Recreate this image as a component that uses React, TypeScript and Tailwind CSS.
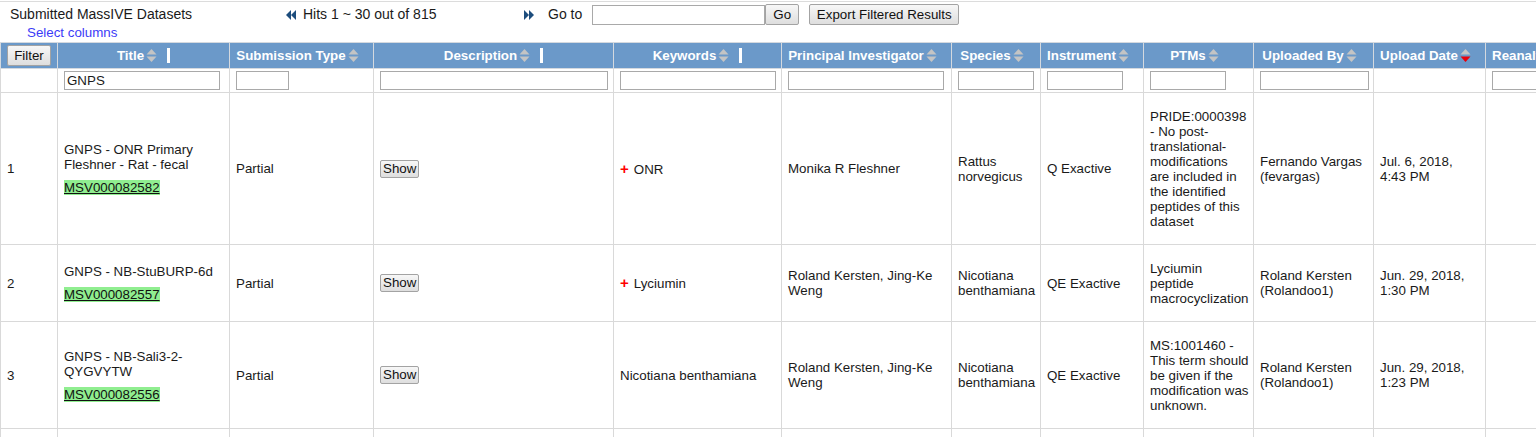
import React from 'react';

interface Column {
    label: string;
    width: string;
    input?: string;
    bar?: boolean;
    active?: boolean;
    left?: boolean;
}

const columns: Column[] = [
    { label: 'Title', width: 'w-[172px]', input: 'w-[156px]', bar: true },
    { label: 'Submission Type', width: 'w-[144px]', input: 'w-[53px]' },
    { label: 'Description', width: 'w-[240px]', input: 'w-[228px]', bar: true },
    { label: 'Keywords', width: 'w-[168px]', input: 'w-[156px]', bar: true },
    { label: 'Principal Investigator', width: 'w-[170px]', input: 'w-[156px]' },
    { label: 'Species', width: 'w-[89px]', input: 'w-[76px]' },
    { label: 'Instrument', width: 'w-[103px]', input: 'w-[76px]' },
    { label: 'PTMs', width: 'w-[110px]', input: 'w-[76px]' },
    { label: 'Uploaded By', width: 'w-[120px]', input: 'w-[109px]' },
    { label: 'Upload Date', width: 'w-[112px]', active: true },
    { label: 'Reanalysis', width: 'w-[130px]', input: 'w-[109px]', left: true },
];

const rows = [
    {
        title: 'GNPS - ONR Primary Fleshner - Rat - fecal',
        id: 'MSV000082582',
        type: 'Partial',
        keyword: 'ONR',
        plus: true,
        pi: 'Monika R Fleshner',
        species: 'Rattus norvegicus',
        instrument: 'Q Exactive',
        ptms: 'PRIDE:0000398 - No post-translational-modifications are included in the identified peptides of this dataset',
        uploader: 'Fernando Vargas (fevargas)',
        date: 'Jul. 6, 2018, 4:43 PM',
    },
    {
        title: 'GNPS - NB-StuBURP-6d',
        id: 'MSV000082557',
        type: 'Partial',
        keyword: 'Lyciumin',
        plus: true,
        pi: 'Roland Kersten, Jing-Ke Weng',
        species: 'Nicotiana benthamiana',
        instrument: 'QE Exactive',
        ptms: 'Lyciumin peptide macrocyclization',
        uploader: 'Roland Kersten (Rolandoo1)',
        date: 'Jun. 29, 2018, 1:30 PM',
    },
    {
        title: 'GNPS - NB-Sali3-2-QYGVYTW',
        id: 'MSV000082556',
        type: 'Partial',
        keyword: 'Nicotiana benthamiana',
        plus: false,
        pi: 'Roland Kersten, Jing-Ke Weng',
        species: 'Nicotiana benthamiana',
        instrument: 'QE Exactive',
        ptms: 'MS:1001460 - This term should be given if the modification was unknown.',
        uploader: 'Roland Kersten (Rolandoo1)',
        date: 'Jun. 29, 2018, 1:23 PM',
    },
];

const SortIcon = ({ active }: { active?: boolean }) => (
    <svg width="11" height="15" viewBox="0 0 11 15" className="shrink-0">
        <polygon points="0.5,6.5 5.5,1 10.5,6.5" fill="#c4c4c4" />
        <polygon points="0.5,8.5 10.5,8.5 5.5,14" fill={active ? '#e8000b' : '#c4c4c4'} />
    </svg>
);

const Arrows = ({ dir }: { dir: 'left' | 'right' }) => (
    <svg width="11" height="10" viewBox="0 0 11 10" className="shrink-0">
        {dir === 'left' ? (
            <>
                <polygon points="0,5 5,0 5,10" fill="#1d4d7d" />
                <polygon points="5,5 10,0 10,10" fill="#1d4d7d" />
            </>
        ) : (
            <>
                <polygon points="1,0 6,5 1,10" fill="#1d4d7d" />
                <polygon points="6,0 11,5 6,10" fill="#1d4d7d" />
            </>
        )}
    </svg>
);

const btn = 'border border-[#a3a3a3] rounded-[2px] bg-gradient-to-b from-[#f7f7f7] to-[#dedede] text-[#111] leading-none';

const td = 'border border-[#d9d9d9] pl-[6px] pr-[4px] py-[15.5px] align-middle';

export default function App() {
    return (
        <div className="h-[437px] w-[1536px] overflow-hidden bg-white font-['Liberation_Sans',Arial,sans-serif] text-[13.333px] leading-[15px] text-[#1a1a1a]">
            <div className="mt-px border-t border-[#dcdcdc]">
                <div className="mt-[2px] flex h-[21px] items-center">
                    <span className="w-[286px] pl-[10px] text-[14px]">Submitted MassIVE Datasets</span>
                    <div className="flex w-[237px] items-center">
                        <Arrows dir="left" />
                        <span className="ml-[6px] text-[14px]">Hits 1 ~ 30 out of 815</span>
                    </div>
                    <Arrows dir="right" />
                    <span className="ml-[14px] text-[14px]">Go to</span>
                    <input className="ml-[10px] h-[20px] w-[173px] border border-[#a9a9a9] bg-white" />
                    <button className={`h-[21px] w-[34px] ${btn}`}>Go</button>
                    <button className={`ml-[10px] h-[21px] w-[150px] ${btn}`}>Export Filtered Results</button>
                </div>
                <div className="pl-[27px] text-[#3b3bf7]">Select columns</div>
            </div>

            <table className="mt-[2px] w-[1615px] table-fixed border-collapse">
                <colgroup>
                    <col className="w-[57px]" />
                    {columns.map((c) => (
                        <col key={c.label} className={c.width} />
                    ))}
                </colgroup>
                <thead>
                    <tr className="bg-[#6b99c9]">
                        <th className="border border-[#d4d9df] px-[6px] py-[2px] text-left">
                            <button className={`h-[21px] w-[44px] font-normal ${btn}`}>Filter</button>
                        </th>
                        {columns.map((c) => (
                            <th key={c.label} className="border border-[#d4d9df] px-[6px] py-[5px] font-bold text-white">
                                <div className={`flex items-center whitespace-nowrap ${c.left ? 'justify-start' : 'justify-center'}`}>
                                    <span>{c.label}</span>
                                    <span className="ml-[2px]">
                                        <SortIcon active={c.active} />
                                    </span>
                                    {c.bar ? (
                                        <span className="ml-[10px] h-[15px] w-[3px] bg-white" />
                                    ) : (
                                        !c.left && <span className="w-[8px]" />
                                    )}
                                </div>
                            </th>
                        ))}
                    </tr>
                    <tr>
                        <td className="border border-[#d9d9d9] py-[2px]" />
                        {columns.map((c) => (
                            <td key={c.label} className="border border-[#d9d9d9] px-[6px] py-[2px]">
                                {c.input ? (
                                    <input
                                        defaultValue={c.label === 'Title' ? 'GNPS' : ''}
                                        className={`block h-[19px] ${c.input} border border-[#a9a9a9] bg-white px-[2px] text-[13.333px]`}
                                    />
                                ) : (
                                    <div className="h-[19px]" />
                                )}
                            </td>
                        ))}
                    </tr>
                </thead>
                <tbody>
                    {rows.map((r, i) => (
                        <tr key={r.id}>
                            <td className={td}>{i + 1}</td>
                            <td className={td}>
                                <div>{r.title}</div>
                                <div className="mt-[8px]">
                                    <a className="bg-[#90ee90] text-[#111] underline">{r.id}</a>
                                </div>
                            </td>
                            <td className={td}>{r.type}</td>
                            <td className={td}>
                                <button className={`h-[18px] px-[2px] ${btn}`}>Show</button>
                            </td>
                            <td className={td}>
                                {r.plus && <span className="mr-[5px] text-[15px] font-bold text-[#f00]">+</span>}
                                {r.keyword}
                            </td>
                            <td className={td}>{r.pi}</td>
                            <td className={td}>{r.species}</td>
                            <td className={td}>{r.instrument}</td>
                            <td className={td}>{r.ptms}</td>
                            <td className={td}>{r.uploader}</td>
                            <td className={td}>{r.date}</td>
                            <td className={td} />
                        </tr>
                    ))}
                    <tr>
                        {[0, 1, 2, 3, 4, 5, 6, 7, 8, 9, 10, 11].map((k) => (
                            <td key={k} className={td}>
                                <div className="h-[45px]" />
                            </td>
                        ))}
                    </tr>
                </tbody>
            </table>
        </div>
    );
}
